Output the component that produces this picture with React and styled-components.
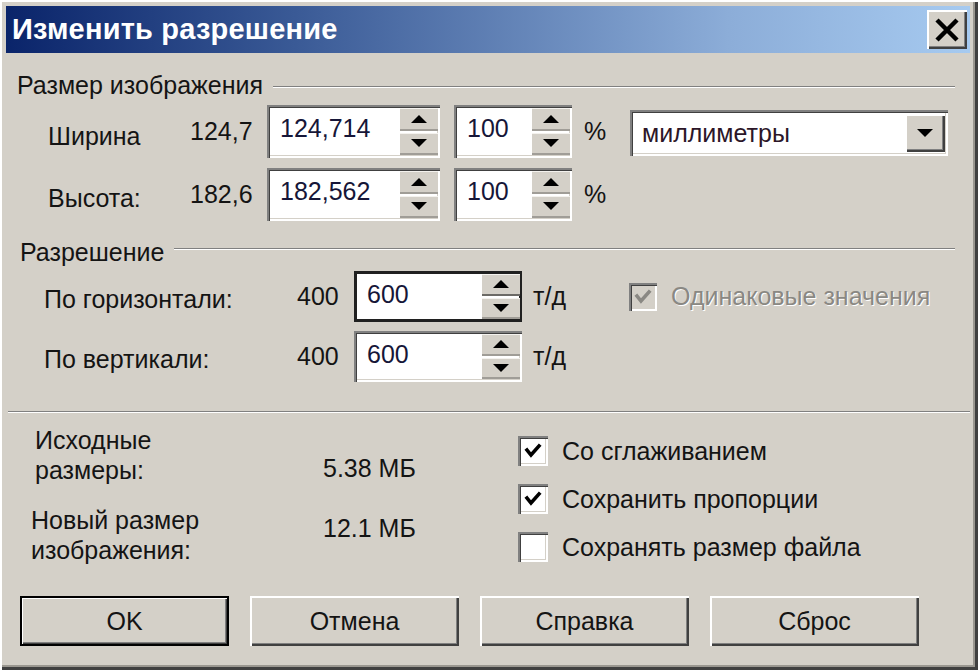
import React from "react";
import styled, { createGlobalStyle, css } from "styled-components";

const Global = createGlobalStyle`
  html, body { margin: 0; padding: 0; background: #d4d0c8; }
  * { box-sizing: border-box; }
`;

const Window = styled.div`
  width: 978px;
  height: 670px;
  background: #d4d0c8;
  box-shadow: inset 2px 2px 0 #ffffff, inset -3px -3px 0 #404040, inset -5px -5px 0 #9a9790;
  display: flex;
  flex-direction: column;
  font-family: "Liberation Sans", Arial, sans-serif;
  font-size: 25px;
  color: #141414;
  overflow: hidden;
`;

const TitleBar = styled.div`
  flex: none;
  height: 47px;
  margin: 6px 8px 0 6px;
  padding: 0 3px 0 6px;
  background: linear-gradient(to right, #0a246a 0%, #3a5a96 30%, #8cadd8 75%, #a6caf0 100%);
  display: flex;
  align-items: center;
  justify-content: space-between;
`;

const TitleText = styled.div`
  color: #ffffff;
  font-weight: bold;
  font-size: 29px;
  letter-spacing: 0.2px;
`;

const raised = css`
  background: #d4d0c8;
  box-shadow: inset 2px 2px 0 #ffffff, inset -2px -2px 0 #404040, inset -3px -3px 0 #808080;
`;

const sunken = css`
  background: #ffffff;
  box-shadow: inset 2px 2px 0 #808080, inset 3px 3px 0 #404040, inset -2px -2px 0 #ffffff, inset -3px -3px 0 #d4d0c8;
`;

const CloseButton = styled.div`
  ${raised};
  width: 40px;
  height: 39px;
  display: flex;
  align-items: center;
  justify-content: center;
`;

const GroupHeader = styled.div`
  display: flex;
  align-items: center;
  height: 30px;
  margin-top: ${(p) => p.$mt}px;
  padding-left: ${(p) => p.$pl}px;
  padding-right: 23px;
`;

const GroupLine = styled.div`
  flex: 1;
  margin-left: 10px;
  margin-top: ${(p) => p.$dy || 0}px;
  border-top: 1px solid #808080;
  border-bottom: 1px solid #ffffff;
`;

const Row = styled.div`
  display: flex;
  align-items: center;
  height: ${(p) => p.$h}px;
  margin-top: ${(p) => p.$mt}px;
`;

const FieldLabel = styled.div`
  flex: none;
  width: ${(p) => p.$w}px;
  padding-left: ${(p) => p.$pl}px;
  padding-top: ${(p) => p.$pt || 0}px;
`;

const FieldValue = styled.div`
  flex: none;
  width: ${(p) => p.$w}px;
`;

const Unit = styled.div`
  flex: none;
  margin-left: ${(p) => p.$ml}px;
  width: ${(p) => p.$w}px;
`;

const SpinFrame = styled.div`
  flex: none;
  ${sunken};
  width: ${(p) => p.$w}px;
  height: ${(p) => p.$h}px;
  margin-left: ${(p) => p.$ml || 0}px;
  display: flex;
  padding: 3px 2px 3px 3px;
  ${(p) =>
    p.$focused &&
    css`
      box-shadow: inset 3px 3px 0 #202020, inset -3px -3px 0 #202020;
    `}
`;

const SpinText = styled.div`
  flex: 1;
  padding-left: 10px;
  padding-top: 5px;
  line-height: 30px;
  color: #161638;
`;

const SpinColumn = styled.div`
  flex: none;
  width: 38px;
  display: flex;
  flex-direction: column;
  gap: 2px;
`;

const SpinButton = styled.div`
  flex: 1;
  background: #d4d0c8;
  border-top: 1px solid #f4f2ee;
  border-bottom: 2px solid ${(p) => (p.$thick ? "#6c6a66" : "#a09d97")};
  display: flex;
  align-items: center;
  justify-content: center;
`;

const Combo = styled.div`
  flex: none;
  ${sunken};
  width: 318px;
  height: 46px;
  margin-left: ${(p) => p.$ml}px;
  align-self: flex-start;
  margin-top: 5px;
  display: flex;
  align-items: center;
  padding: 3px 3px 3px 12px;
`;

const ComboText = styled.div`
  flex: 1;
  color: #2c1628;
`;

const ComboButton = styled.div`
  ${raised};
  width: 40px;
  height: 38px;
  display: flex;
  align-items: center;
  justify-content: center;
`;

const Separator = styled.div`
  margin: 29px 8px 0 8px;
  border-top: 1px solid #808080;
  border-bottom: 1px solid #ffffff;
`;

const BottomSection = styled.div`
  display: flex;
  height: 183px;
`;

const InfoGrid = styled.div`
  flex: none;
  width: 518px;
  display: grid;
  grid-template-columns: 323px 1fr;
  grid-auto-rows: auto;
  row-gap: 20px;
  padding-top: 12px;
  align-content: start;
`;

const InfoLabel = styled.div`
  padding-left: ${(p) => p.$pl}px;
  line-height: 30px;
`;

const InfoValue = styled.div`
  line-height: 30px;
  align-self: ${(p) => p.$align};
  margin-top: ${(p) => p.$mt || 0}px;
  margin-bottom: ${(p) => p.$mb || 0}px;
`;

const CheckList = styled.div`
  display: flex;
  flex-direction: column;
  padding-top: 14px;
`;

const CheckRow = styled.div`
  display: flex;
  align-items: center;
  height: 48px;
  margin-left: ${(p) => p.$ml || 0}px;
  color: ${(p) => (p.$disabled ? "#8a8883" : "inherit")};
  text-shadow: ${(p) => (p.$disabled ? "1px 1px 0 #ffffff" : "none")};
`;

const CheckBox = styled.div`
  flex: none;
  width: ${(p) => p.$size}px;
  height: ${(p) => p.$size}px;
  margin-right: 14px;
  ${sunken};
  background: ${(p) => (p.$disabled ? "#d4d0c8" : "#ffffff")};
  display: flex;
  align-items: center;
  justify-content: center;
`;

const ButtonRow = styled.div`
  display: flex;
  gap: 21px;
  padding-left: 20px;
`;

const Button = styled.div`
  ${raised};
  width: 209px;
  height: 50px;
  display: flex;
  align-items: center;
  justify-content: center;
  ${(p) =>
    p.$default &&
    css`
      box-shadow: inset 0 0 0 2px #000000, inset 3px 3px 0 #ffffff, inset -3px -3px 0 #404040,
        inset -4px -4px 0 #808080;
    `}
`;

const Arrow = ({ down }) => (
  <svg width="18" height="10" viewBox="0 0 18 10">
    <polygon points={down ? "1,1 17,1 9,9" : "1,9 17,9 9,1"} fill="#000" />
  </svg>
);

const Check = ({ color = "#000" }) => (
  <svg width="20" height="20" viewBox="0 0 20 20">
    <polyline points="4,9 8,14 16,5" fill="none" stroke={color} strokeWidth="3.6" strokeLinecap="square" />
  </svg>
);

const Spin = ({ value, w, h, ml, focused }) => (
  <SpinFrame $w={w} $h={h} $ml={ml} $focused={focused}>
    <SpinText>{value}</SpinText>
    <SpinColumn>
      <SpinButton $thick={focused}>
        <Arrow />
      </SpinButton>
      <SpinButton>
        <Arrow down />
      </SpinButton>
    </SpinColumn>
  </SpinFrame>
);

export default function App() {
  return (
    <>
      <Global />
      <Window>
        <TitleBar>
          <TitleText>Изменить разрешение</TitleText>
          <CloseButton>
            <svg width="28" height="26" viewBox="0 0 28 26">
              <path d="M4 3 L24 23 M24 3 L4 23" stroke="#000" strokeWidth="4.5" />
            </svg>
          </CloseButton>
        </TitleBar>

        <GroupHeader $mt={17} $pl={17}>
          Размер изображения
          <GroupLine $dy={4} />
        </GroupHeader>

        <Row $h={53} $mt={5}>
          <FieldLabel $w={190} $pl={48} $pt={10}>Ширина</FieldLabel>
          <FieldValue $w={77}>124,7</FieldValue>
          <Spin value="124,714" w={173} h={53} />
          <Spin value="100" w={118} h={53} ml={14} />
          <Unit $ml={12} $w={24}>%</Unit>
          <Combo $ml={22}>
            <ComboText>миллиметры</ComboText>
            <ComboButton>
              <Arrow down />
            </ComboButton>
          </Combo>
        </Row>

        <Row $h={53} $mt={10}>
          <FieldLabel $w={190} $pl={48} $pt={8}>Высота:</FieldLabel>
          <FieldValue $w={77}>182,6</FieldValue>
          <Spin value="182,562" w={173} h={53} />
          <Spin value="100" w={118} h={53} ml={14} />
          <Unit $ml={12} $w={24}>%</Unit>
        </Row>

        <GroupHeader $mt={16} $pl={20}>
          Разрешение
          <GroupLine $dy={-6} />
        </GroupHeader>

        <Row $h={51} $mt={4}>
          <FieldLabel $w={297} $pl={44} $pt={6}>По горизонтали:</FieldLabel>
          <FieldValue $w={57}>400</FieldValue>
          <Spin value="600" w={168} h={51} focused />
          <Unit $ml={11} $w={40}>т/д</Unit>
          <CheckRow $ml={56} $disabled>
            <CheckBox $size={28} $disabled>
              <Check color="#8a8883" />
            </CheckBox>
            Одинаковые значения
          </CheckRow>
        </Row>

        <Row $h={51} $mt={9}>
          <FieldLabel $w={297} $pl={44} $pt={6}>По вертикали:</FieldLabel>
          <FieldValue $w={57}>400</FieldValue>
          <Spin value="600" w={168} h={51} />
          <Unit $ml={11} $w={40}>т/д</Unit>
        </Row>

        <Separator />

        <BottomSection>
          <InfoGrid>
            <InfoLabel $pl={35}>
              Исходные
              <br />
              размеры:
            </InfoLabel>
            <InfoValue $align="end" $mb={2}>5.38 МБ</InfoValue>
            <InfoLabel $pl={31}>
              Новый размер
              <br />
              изображения:
            </InfoLabel>
            <InfoValue $align="start" $mt={8}>12.1 МБ</InfoValue>
          </InfoGrid>
          <CheckList>
            <CheckRow>
              <CheckBox $size={30}>
                <Check />
              </CheckBox>
              Со сглаживанием
            </CheckRow>
            <CheckRow>
              <CheckBox $size={30}>
                <Check />
              </CheckBox>
              Сохранить пропорции
            </CheckRow>
            <CheckRow>
              <CheckBox $size={30} />
              Сохранять размер файла
            </CheckRow>
          </CheckList>
        </BottomSection>

        <ButtonRow>
          <Button $default>OK</Button>
          <Button>Отмена</Button>
          <Button>Справка</Button>
          <Button>Сброс</Button>
        </ButtonRow>
      </Window>
    </>
  );
}
